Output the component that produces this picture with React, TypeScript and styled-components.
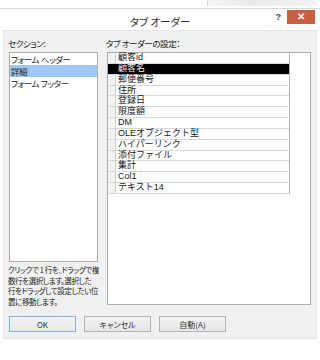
import React from "react";
import styled, { createGlobalStyle } from "styled-components";

const GlobalStyle = createGlobalStyle`
  html, body { margin: 0; padding: 0; background: #ffffff; }
  body {
    font-family: "Noto Sans CJK JP", "Noto Sans", sans-serif;
    font-feature-settings: "palt";
    color: #1e1e1e;
  }
`;

const Window = styled.div`
  width: 320px;
  height: 360px;
  background: #ffffff;
  display: flex;
  flex-direction: column;
  overflow: hidden;
`;

const TopStrip = styled.div`
  height: 8px;
  border-bottom: 1px solid #d6d6d6;
  display: flex;
  justify-content: flex-end;
  align-items: flex-start;
`;

const FadedTool = styled.div`
  width: 110px;
  height: 6px;
  margin-right: 2px;
  border-left: 1px solid #d8d8d8;
  background: linear-gradient(90deg, #f4f4f4, #e9e9e9 40%, #f4f4f4);
`;

const TitleBar = styled.div`
  height: 21px;
  display: grid;
  grid-template-columns: 1fr auto 1fr;
  align-items: start;
`;

const Title = styled.div`
  grid-column: 2;
  font-size: 10.5px;
  line-height: 14px;
  margin-top: 6px;
  color: #333;
`;

const Controls = styled.div`
  grid-column: 3;
  justify-self: end;
  display: flex;
  align-items: flex-start;
  gap: 6px;
  margin-right: 5px;
  margin-top: 1px;
`;

const Help = styled.span`
  font-family: "Liberation Sans", sans-serif;
  font-weight: bold;
  font-size: 9px;
  line-height: 12px;
  color: #444;
  margin-top: 1px;
`;

const CloseButton = styled.div`
  width: 28px;
  height: 14px;
  background: #c85f3e;
  color: #fff;
  display: flex;
  align-items: center;
  justify-content: center;
  font-family: "Liberation Sans", sans-serif;
  font-size: 10px;
  font-weight: bold;
  line-height: 1;
`;

const Panel = styled.div`
  margin: 0 3px;
  height: 309px;
  box-sizing: border-box;
  background: #f0f0f0;
  border: 1px solid #e4e4e4;
  padding: 6px 5px;
  display: flex;
  flex-direction: column;
`;

const Body = styled.div`
  height: 272px;
  display: flex;
  gap: 9px;
`;

const Column = styled.div<{ $w: number }>`
  width: ${(p) => p.$w}px;
  display: flex;
  flex-direction: column;
`;

const Label = styled.div`
  height: 12px;
  line-height: 12px;
  font-size: 8.5px;
  letter-spacing: -0.4px;
  margin-bottom: 3px;
  margin-left: -1px;
  color: #222;
  white-space: nowrap;
`;

const ListBox = styled.div`
  height: 210px;
  box-sizing: border-box;
  border: 1px solid #adadad;
  background: #fff;
`;

const ListItem = styled.div<{ $sel?: boolean }>`
  height: 12px;
  line-height: 12px;
  font-size: 8.5px;
  letter-spacing: -0.4px;
  padding-left: 1px;
  background: ${(p) => (p.$sel ? "#9dc6f2" : "transparent")};
  color: #1e1e1e;
  white-space: nowrap;
`;

const Hint = styled.div`
  margin-top: 3px;
  margin-left: -1px;
  font-size: 7.5px;
  line-height: 10.5px;
  color: #222;
  white-space: nowrap;
  letter-spacing: -0.4px;
`;

const HintLine = styled.div``;

const OrderBox = styled.div`
  height: 253px;
  box-sizing: border-box;
  border: 1px solid #adadad;
  background: #fff;
`;

const Grid = styled.div`
  width: 182px;
  box-sizing: border-box;
  border-right: 1px solid #b4b4b4;
`;

const Row = styled.div<{ $sel?: boolean }>`
  height: 10.85px;
  box-sizing: border-box;
  border-bottom: 1px solid #d8d8d8;
  display: flex;
  align-items: flex-start;
  background: ${(p) => (p.$sel ? "#000" : "#fff")};
  color: ${(p) => (p.$sel ? "#e8e8e8" : "#1a1a1a")};
`;

const Selector = styled.div<{ $sel?: boolean }>`
  width: 8px;
  align-self: stretch;
  flex: none;
  box-sizing: border-box;
  border-right: 1px solid ${(p) => (p.$sel ? "#000" : "#cfcfcf")};
  background: ${(p) => (p.$sel ? "#000" : "#f2f2f2")};
`;

const Cell = styled.div`
  padding-left: 2px;
  font-family: "Liberation Sans", "Noto Sans CJK JP", sans-serif;
  font-size: 9px;
  line-height: 9.8px;
  font-feature-settings: normal;
  white-space: nowrap;
`;

const Buttons = styled.div`
  margin-top: 7px;
  display: flex;
  gap: 8px;
`;

const Button = styled.div<{ $default?: boolean }>`
  width: 67px;
  height: 16px;
  box-sizing: border-box;
  border: 1px solid ${(p) => (p.$default ? "#7fb3e3" : "#b4b4b4")};
  background: ${(p) =>
    p.$default
      ? "linear-gradient(#f4f4f4, #e9e9e9)"
      : "linear-gradient(#f2f2f2, #e6e6e6)"};
  display: flex;
  align-items: center;
  justify-content: center;
  font-size: 8px;
  color: #333;
`;

const sections = ["フォーム ヘッダー", "詳細", "フォーム フッター"];
const fields = [
  "顧客id",
  "顧客名",
  "郵便番号",
  "住所",
  "登録日",
  "限度額",
  "DM",
  "OLEオブジェクト型",
  "ハイパーリンク",
  "添付ファイル",
  "集計",
  "Col1",
  "テキスト14",
];

export default function App() {
  return (
    <>
      <GlobalStyle />
      <Window>
        <TopStrip>
          <FadedTool />
        </TopStrip>
        <TitleBar>
          <Title>タブ オーダー</Title>
          <Controls>
            <Help>?</Help>
            <CloseButton>✕</CloseButton>
          </Controls>
        </TitleBar>
        <Panel>
          <Body>
            <Column $w={89}>
              <Label>セクション:</Label>
              <ListBox>
                {sections.map((s, i) => (
                  <ListItem key={s} $sel={i === 1}>
                    {s}
                  </ListItem>
                ))}
              </ListBox>
              <Hint>
                <HintLine>クリックで 1 行を、ドラッグで複</HintLine>
                <HintLine>数行を選択します。選択した</HintLine>
                <HintLine>行をドラッグして設定したい位</HintLine>
                <HintLine>置に移動します。</HintLine>
              </Hint>
            </Column>
            <Column $w={204}>
              <Label>タブ オーダーの設定：</Label>
              <OrderBox>
                <Grid>
                  {fields.map((f, i) => (
                    <Row key={f} $sel={i === 1}>
                      <Selector $sel={i === 1} />
                      <Cell>{f}</Cell>
                    </Row>
                  ))}
                </Grid>
              </OrderBox>
            </Column>
          </Body>
          <Buttons>
            <Button $default>OK</Button>
            <Button>キャンセル</Button>
            <Button>自動(A)</Button>
          </Buttons>
        </Panel>
      </Window>
    </>
  );
}
